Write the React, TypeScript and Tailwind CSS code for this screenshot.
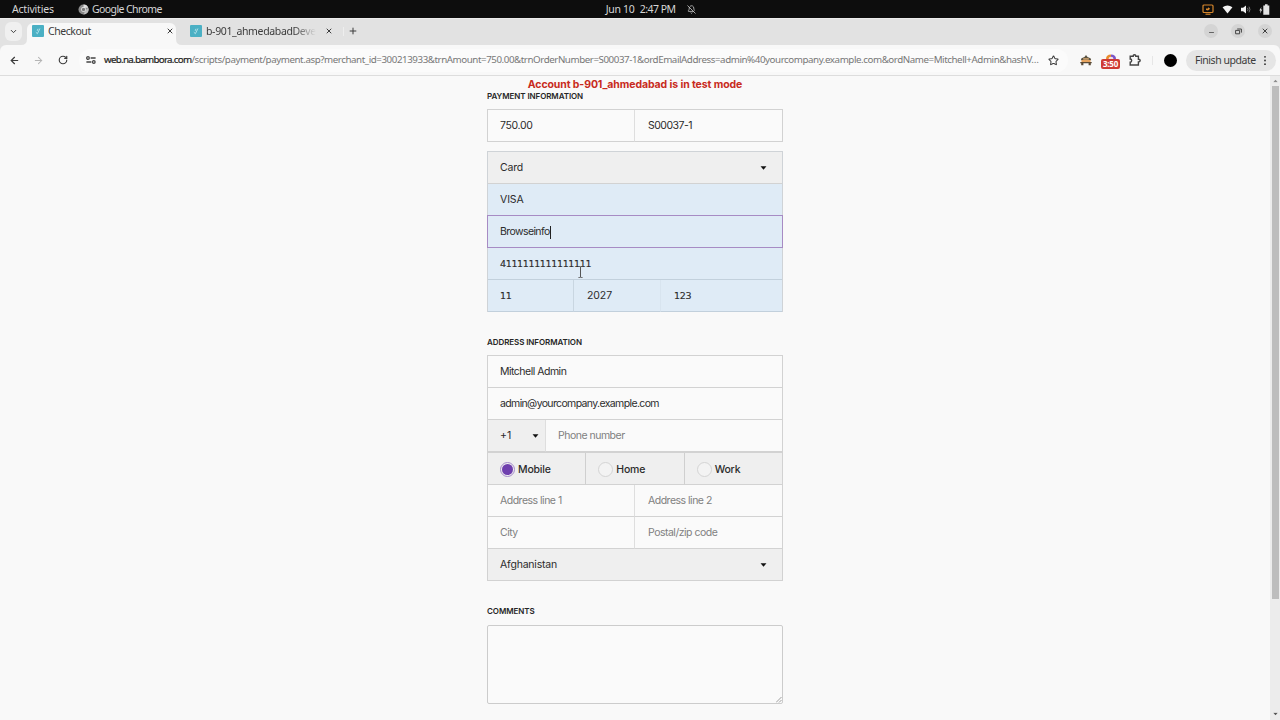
import type { ReactNode } from 'react';
import { ArrowLeft, ArrowRight, BellOff, ChevronDown, Minus, Plus, RotateCw, Star, X } from 'lucide-react';
import { clsx } from 'clsx';

function Caret({ className = 'text-[#111]' }: { className?: string }) {
    return (
        <svg viewBox="0 0 8 5" className={clsx('h-[4px] w-[7px] shrink-0 fill-current', className)} aria-hidden="true">
            <path d="M0.3 0.3h7.4L4 4.7z" />
        </svg>
    );
}

function Favicon() {
    return (
        <svg viewBox="0 0 12 12" className="h-[12px] w-[12px] shrink-0" aria-hidden="true">
            <rect width="12" height="12" rx="1" fill="#4bb0c4" />
            <path d="M3.8 7.2l1.6 1.5 2.5-5.2M5.2 5.8l.8-2" fill="none" stroke="#b9e5ec" strokeWidth="0.9" />
        </svg>
    );
}

function TopBar() {
    return (
        <header className="grid h-[18px] shrink-0 grid-cols-3 items-center bg-[#0d0d0d] text-[10.5px] leading-[18px] text-[#d6d6d6]">
            <div className="flex items-center pl-[12px]">
                <span className="w-[66px] tracking-[-0.2px]">Activities</span>
                <svg viewBox="0 0 12 12" className="mr-[3px] h-[11px] w-[11px]" aria-hidden="true">
                    <circle cx="6" cy="6" r="5.5" fill="#8b8b8b" />
                    <path d="M6 .5A5.5 5.5 0 0 1 11.2 4H6z" fill="#ddd" />
                    <path d="M11.2 4A5.5 5.5 0 0 1 6 11.5L8 7z" fill="#bcbcbc" />
                    <circle cx="6" cy="6" r="2.6" fill="#eee" />
                    <circle cx="6" cy="6" r="1.8" fill="#777" />
                </svg>
                <span className="tracking-[-0.6px]">Google Chrome</span>
            </div>
            <div className="flex items-center pl-[179px] whitespace-nowrap">
                <span className="w-[34px] tracking-[-0.3px]">Jun 10</span>
                <span className="w-[47px] tracking-[-0.5px]">2:47 PM</span>
                <BellOff size={9} strokeWidth={2} />
            </div>
            <div className="flex items-center justify-end gap-[8px] pr-[10px]">
                <svg viewBox="0 0 12 11" className="h-[11px] w-[12px]" fill="none" stroke="#d5862c" aria-hidden="true">
                    <rect x="1" y="1" width="10" height="7.5" rx="1" strokeWidth="1.2" />
                    <path d="M3.5 10.2h5" strokeWidth="1.2" />
                    <path d="M4 6V4.5h2V3.2l2.2 1.6L6 6.4z" fill="#d5862c" stroke="none" />
                </svg>
                <svg viewBox="0 0 12 10" className="h-[9px] w-[11px]" aria-hidden="true">
                    <path d="M.5 2.5Q6-1.4 11.5 2.5L6 9.5z" fill="#f3f3f3" />
                </svg>
                <svg viewBox="0 0 12 10" className="h-[9px] w-[10px]" fill="none" stroke="#888" aria-hidden="true">
                    <path d="M0 3h2.5L6 .2v9.6L2.5 7H0z" fill="#f3f3f3" stroke="none" />
                    <path d="M7.8 3q1.3 2 0 4M9.6 1.6q2.3 3.4 0 6.8" />
                </svg>
                <svg viewBox="0 0 11 11" className="h-[11px] w-[11px]" fill="#e2e2e2" aria-hidden="true">
                    <path d="M2.4 3L.3 6.5h1.3L1 9.5l2.3-4H2z" />
                    <path d="M6 .3h2.6v1.2h1.7v9.2H4.3V1.5H6z" />
                </svg>
            </div>
        </header>
    );
}

function WindowButton({ children }: { children: ReactNode }) {
    return (
        <span className="flex h-[14px] w-[14px] items-center justify-center rounded-full bg-[#d4d4d4] text-[#333]">
            {children}
        </span>
    );
}

function TabStrip() {
    return (
        <div className="flex h-[27px] shrink-0 items-end border-t border-[#ececec] bg-[#e2e2e2] text-[#3c3c3c]">
            <span className="mb-[4px] ml-[5px] flex h-[19px] w-[17px] items-center justify-center rounded-[6px] bg-[#f0f0f0]">
                <ChevronDown size={9} strokeWidth={2.6} />
            </span>
            <div className="relative ml-[5px] flex h-[22px] w-[149px] items-center rounded-t-[6px] bg-[#f8f8f8] pb-[6px] pl-[5px]">
                <svg viewBox="0 0 6 6" className="absolute bottom-0 left-[-6px] h-[6px] w-[6px] fill-[#f8f8f8]">
                    <path d="M6 0v6H0Q6 6 6 0z" />
                </svg>
                <svg viewBox="0 0 6 6" className="absolute right-[-6px] bottom-0 h-[6px] w-[6px] fill-[#f8f8f8]">
                    <path d="M0 0v6h6Q0 6 0 0z" />
                </svg>
                <Favicon />
                <span className="ml-[4px] w-[118px] text-[10.5px] leading-[16px] tracking-[-0.45px]">Checkout</span>
                <X size={8} strokeWidth={3} />
            </div>
            <div className="flex h-[22px] items-center pb-[6px] pl-[14px]">
                <Favicon />
                <span className="ml-[4px] w-[110px] mask-r-from-80% text-[10.5px] leading-[16px] tracking-[-0.35px] whitespace-nowrap">
                    b-901_ahmedabadDeve
                </span>
                <span className="ml-[9px]">
                    <X size={8} strokeWidth={3} />
                </span>
                <span className="mr-[4px] ml-[10px] h-[9px] w-px bg-[#eeeeee]" />
                <Plus size={10} strokeWidth={2.4} />
            </div>
            <div className="mb-[7px] ml-auto flex gap-[13px] pr-[8px]">
                <WindowButton>
                    <Minus size={7} strokeWidth={2.4} className="translate-y-[1px]" />
                </WindowButton>
                <WindowButton>
                    <svg viewBox="0 0 7 7" className="h-[7px] w-[7px]" fill="none" stroke="#444" aria-hidden="true">
                        <path d="M.6 2.4h4v3.4h-4zM2.2 1h4.2v3.6" />
                    </svg>
                </WindowButton>
                <WindowButton>
                    <X size={8} strokeWidth={2.8} />
                </WindowButton>
            </div>
        </div>
    );
}

function Toolbar() {
    return (
        <div className="flex h-[31px] shrink-0 items-center rounded-t-[6px] border-b border-[#dddddd] bg-[#f8f8f8] text-[#3c3c3c]">
            <ArrowLeft size={11} strokeWidth={2.6} className="ml-[9px] shrink-0" />
            <ArrowRight size={11} strokeWidth={2.2} className="ml-[13px] shrink-0 text-[#b5b5b5]" />
            <RotateCw size={10} strokeWidth={2.8} className="ml-[14px] shrink-0" />
            <div className="ml-[11px] flex h-[23px] w-[989px] shrink-0 items-center rounded-full bg-[#fbfbfb] pl-[7px]">
                <svg viewBox="0 0 10 8" className="h-[8px] w-[10px] shrink-0" fill="none" stroke="#444" strokeWidth="1.3" aria-hidden="true">
                    <circle cx="2" cy="2" r="1.3" />
                    <path d="M4.6 2H9.6M.4 6h5" />
                    <circle cx="7.8" cy="6" r="1.3" />
                </svg>
                <span className="ml-[8px] text-[9.75px] whitespace-nowrap text-[#777]">
                    <span className="tracking-[-0.7px] text-[#222] [-webkit-text-stroke:0.2px_#222]">web.na.bambora.com</span>
                    <span className="tracking-[-0.43px]">/scripts/payment/payment.asp?merchant_id=300213933&amp;trnAmount=750.00&amp;trnOrderNumber=S00037-1&amp;ordEmailAddress=admin%40yourcompany.example.com&amp;ordName=Mitchell+Admin&amp;hashV…</span>
                </span>
                <Star size={11} strokeWidth={2.2} className="mr-[9px] ml-auto shrink-0" />
            </div>
            <svg viewBox="0 0 12 11" className="ml-[12px] h-[11px] w-[12px] shrink-0" aria-hidden="true">
                <path d="M6 0l1.5 2 3 1.3.7 2H.8l.7-2 3-1.3z" fill="#5a5240" />
                <path d="M1.5 5h9v2.5h-9z" fill="#e5a25d" />
                <path d="M.3 7h11.4v1.3H.3zM1.2 8h2.2v2.3H1.2zM8.6 8h2.2v2.3H8.6z" fill="#5a4a36" />
                <path d="M3.2 3.3h5.6v1.3H3.2z" fill="#e8b579" />
            </svg>
            <div className="ml-[9px] flex w-[19px] shrink-0 flex-col items-center pt-[2px]">
                <svg viewBox="0 0 12 5" className="h-[5px] w-[12px]" aria-hidden="true">
                    <path d="M1 5Q1 .5 6 .5V5z" fill="#e98b2c" />
                    <path d="M6 .5Q11 .5 11 5H6z" fill="#7b55c7" />
                    <path d="M3.5 5a2.5 2.3 0 0 1 5 0z" fill="#f3dfe5" />
                </svg>
                <span className="h-[10px] w-[19px] rounded-[2px] bg-[#cf3a34] text-center text-[8px] leading-[10px] font-bold tracking-[-0.2px] text-white">
                    3:50
                </span>
            </div>
            <svg viewBox="0 0 12 12" className="ml-[9px] h-[12px] w-[12px] shrink-0" fill="none" stroke="#444" strokeWidth="1.4" aria-hidden="true">
                <path d="M1.2 2.2h3q0-1.5 1.3-1.5t1.3 1.5h2.6v3q1.8 0 1.8 1.4t-1.8 1.4v3H1.2V8.2q1.5 0 1.5-1.6T1.2 5z" />
            </svg>
            <span className="mx-[11px] h-[9px] w-px shrink-0 bg-[#e6e6e6]" />
            <span className="h-[13px] w-[13px] shrink-0 rounded-full bg-black" />
            <div className="ml-[9px] flex h-[21px] w-[90px] shrink-0 items-center rounded-full bg-[#e5e5e5] pl-[9px]">
                <span className="w-[69px] pt-px text-[10.5px] tracking-[-0.45px] whitespace-nowrap">Finish update</span>
                <svg viewBox="0 0 2 12" className="h-[11px] w-[2px] fill-[#333]" aria-hidden="true">
                    <circle cx="1" cy="2" r="1" />
                    <circle cx="1" cy="6" r="1" />
                    <circle cx="1" cy="10" r="1" />
                </svg>
            </div>
        </div>
    );
}

interface FieldProps {
    children: ReactNode;
    /** 'plain' = input, 'filled' = grey select, 'auto' = browser autofill */
    variant?: 'plain' | 'filled' | 'auto';
    placeholder?: boolean;
    className?: string;
}

function Field({ children, variant = 'plain', placeholder = false, className }: FieldProps) {
    return (
        <div
            className={clsx(
                'flex h-[32px] items-center border-b pl-[12px]',
                variant === 'plain' && 'border-[#d2d2d2] bg-[#fafafa]',
                variant === 'filled' && 'border-[#d2d2d2] bg-[#efefef]',
                variant === 'auto' && 'border-[#c2d0dc] bg-[#dfebf6]',
                variant === 'plain' && !placeholder && 'pt-px',
                placeholder ? 'text-[#808080]' : 'text-[#2c2c2c]',
                className ?? 'w-full',
            )}
        >
            {children}
        </div>
    );
}

// Digits with a foot on the 1, as in the card fields
function Digits({ children }: { children: ReactNode }) {
    return (
        <span className="font-['DejaVu_Sans',sans-serif] text-[9.5px] tracking-[-0.35px] [-webkit-text-stroke:0.15px_#2c2c2c]">
            {children}
        </span>
    );
}

function Heading({ children }: { children: ReactNode }) {
    return (
        <h2 className="h-[10px] text-[8px] leading-[10px] font-semibold tracking-[-0.08px] text-[#262626]">
            {children}
        </h2>
    );
}

const phoneTypes = [
    { label: 'Mobile', checked: true },
    { label: 'Home', checked: false },
    { label: 'Work', checked: false },
];

function PaymentForm() {
    return (
        <main className="ml-[487px] w-[296px] font-[Inter,sans-serif] text-[10.5px] leading-[14px] tracking-[-0.5px]">
            <p className="mt-[2px] text-center text-[10.5px] leading-[13px] font-bold tracking-[-0.1px] whitespace-nowrap text-[#c82a20]">
                Account b-901_ahmedabad is in test mode
            </p>
            <Heading>PAYMENT INFORMATION</Heading>
            <div className="mt-[8px] flex border-x border-t border-[#d2d2d2]">
                <Field className="w-[147px] border-r border-r-[#dedede]">
                    <span className="tracking-[-0.35px]">750.00</span>
                </Field>
                <Field className="flex-1 pl-[13px]">S00037-1</Field>
            </div>

            <div className="mt-[9px] border-x border-t border-[#cfd3d7]">
                <Field variant="filled">
                    <span className="tracking-[-0.2px]">Card</span>
                    <Caret className="mr-[15px] ml-auto text-[#111]" />
                </Field>
                <Field variant="auto">
                    <span className="tracking-[-0.1px]">VISA</span>
                </Field>
                <div className="relative z-10">
                    <Field variant="auto" className="w-full pt-px">
                        <span className="tracking-[-0.6px]">Browseinfo</span>
                        <span className="h-[13px] w-px bg-[#222]" />
                    </Field>
                    <span className="absolute -top-px -right-px bottom-0 -left-px border border-[#a78bc4]" />
                </div>
                <div className="relative">
                    <Field variant="auto" className="w-full pt-px">
                        <Digits>4111111111111111</Digits>
                    </Field>
                    <svg viewBox="0 0 5 12" className="absolute top-[18px] left-[90px] h-[12px] w-[5px]" fill="none" stroke="#555" aria-hidden="true">
                        <path d="M.5.5h1.2q.8 0 .8.8v9.4q0 .8-.8.8H.5M4.5.5H3.3q-.8 0-.8.8v9.4q0 .8.8.8h1.2" />
                    </svg>
                </div>
                <div className="flex">
                    <Field variant="auto" className="w-[86px] border-r border-r-[#c9d6e1]">
                        <Digits>11</Digits>
                    </Field>
                    <Field variant="auto" className="w-[87px] border-r border-r-[#d8e4ef] pl-[13px]">
                        <span className="tracking-[-0.1px]">2027</span>
                    </Field>
                    <Field variant="auto" className="flex-1 pt-px pl-[13px]">
                        <Digits>123</Digits>
                    </Field>
                </div>
            </div>

            <div className="mt-[25px]">
                <Heading>ADDRESS INFORMATION</Heading>
            </div>
            <div className="mt-[8px] border-x border-t border-[#d2d2d2]">
                <Field>Mitchell Admin</Field>
                <Field>
                    <span className="tracking-[-0.63px]">admin@yourcompany.example.com</span>
                </Field>
                <div className="flex">
                    <Field variant="filled" className="w-[58px] border-r border-r-[#dedede] pt-px">
                        <span className="tracking-normal">+1</span>
                        <Caret className="mr-[6px] ml-auto text-[#111]" />
                    </Field>
                    <Field placeholder className="flex-1 pt-px">Phone number</Field>
                </div>
                <div className="flex border-t border-[#d2d2d2]">
                    {phoneTypes.map(({ label, checked }) => (
                        <Field
                            key={label}
                            variant="filled"
                            className="flex-1 border-r border-r-[#cfcfcf] pt-[2px] font-medium tracking-[-0.2px] last:border-r-0"
                        >
                            <span
                                className={clsx(
                                    'mr-[3px] flex h-[15px] w-[15px] items-center justify-center rounded-full border',
                                    checked ? 'border-[#a58acb]' : 'border-[#d4d4d4] bg-[#f3f3f3]',
                                )}
                            >
                                {checked && <span className="h-[11px] w-[11px] rounded-full bg-[#6f3fae]" />}
                            </span>
                            <span className="pt-px">{label}</span>
                        </Field>
                    ))}
                </div>
                <div className="flex">
                    <Field placeholder className="w-[147px] border-r border-r-[#dedede]">Address line 1</Field>
                    <Field placeholder className="flex-1 pl-[13px]">Address line 2</Field>
                </div>
                <div className="flex">
                    <Field placeholder className="w-[147px] border-r border-r-[#dedede]">City</Field>
                    <Field placeholder className="flex-1 pl-[13px]">Postal/zip code</Field>
                </div>
                <Field variant="filled">
                    <span className="tracking-[-0.2px]">Afghanistan</span>
                    <Caret className="mr-[15px] ml-auto text-[#111]" />
                </Field>
            </div>

            <div className="mt-[25px]">
                <Heading>COMMENTS</Heading>
            </div>
            <div className="mt-[9px] flex h-[79px] items-end justify-end rounded-[2px] border border-[#cccccc] bg-[#fafafa]">
                <svg viewBox="0 0 6 6" className="h-[6px] w-[6px]" stroke="#888" strokeWidth="0.8" aria-hidden="true">
                    <path d="M0 5.5L5.5 0M3 5.5L5.5 3" />
                </svg>
            </div>
        </main>
    );
}

function Scrollbar() {
    return (
        <div className="flex w-[10px] flex-col items-center bg-[#ececec]">
            <Caret className="mt-[3px] rotate-180 scale-75 text-[#8b8b8b]" />
            <span className="mt-[3px] h-[513px] w-[7px] bg-[#bdbdbd]" />
            <Caret className="mt-auto mb-[4px] scale-75 text-[#555]" />
        </div>
    );
}

export default function App() {
    return (
        <div className="flex h-[720px] w-[1280px] flex-col overflow-hidden bg-[#e2e2e2] font-['Noto_Sans',sans-serif]">
            <TopBar />
            <TabStrip />
            <Toolbar />
            <div className="flex flex-1 justify-between bg-[#f9f9f9]">
                <PaymentForm />
                <Scrollbar />
            </div>
        </div>
    );
}
